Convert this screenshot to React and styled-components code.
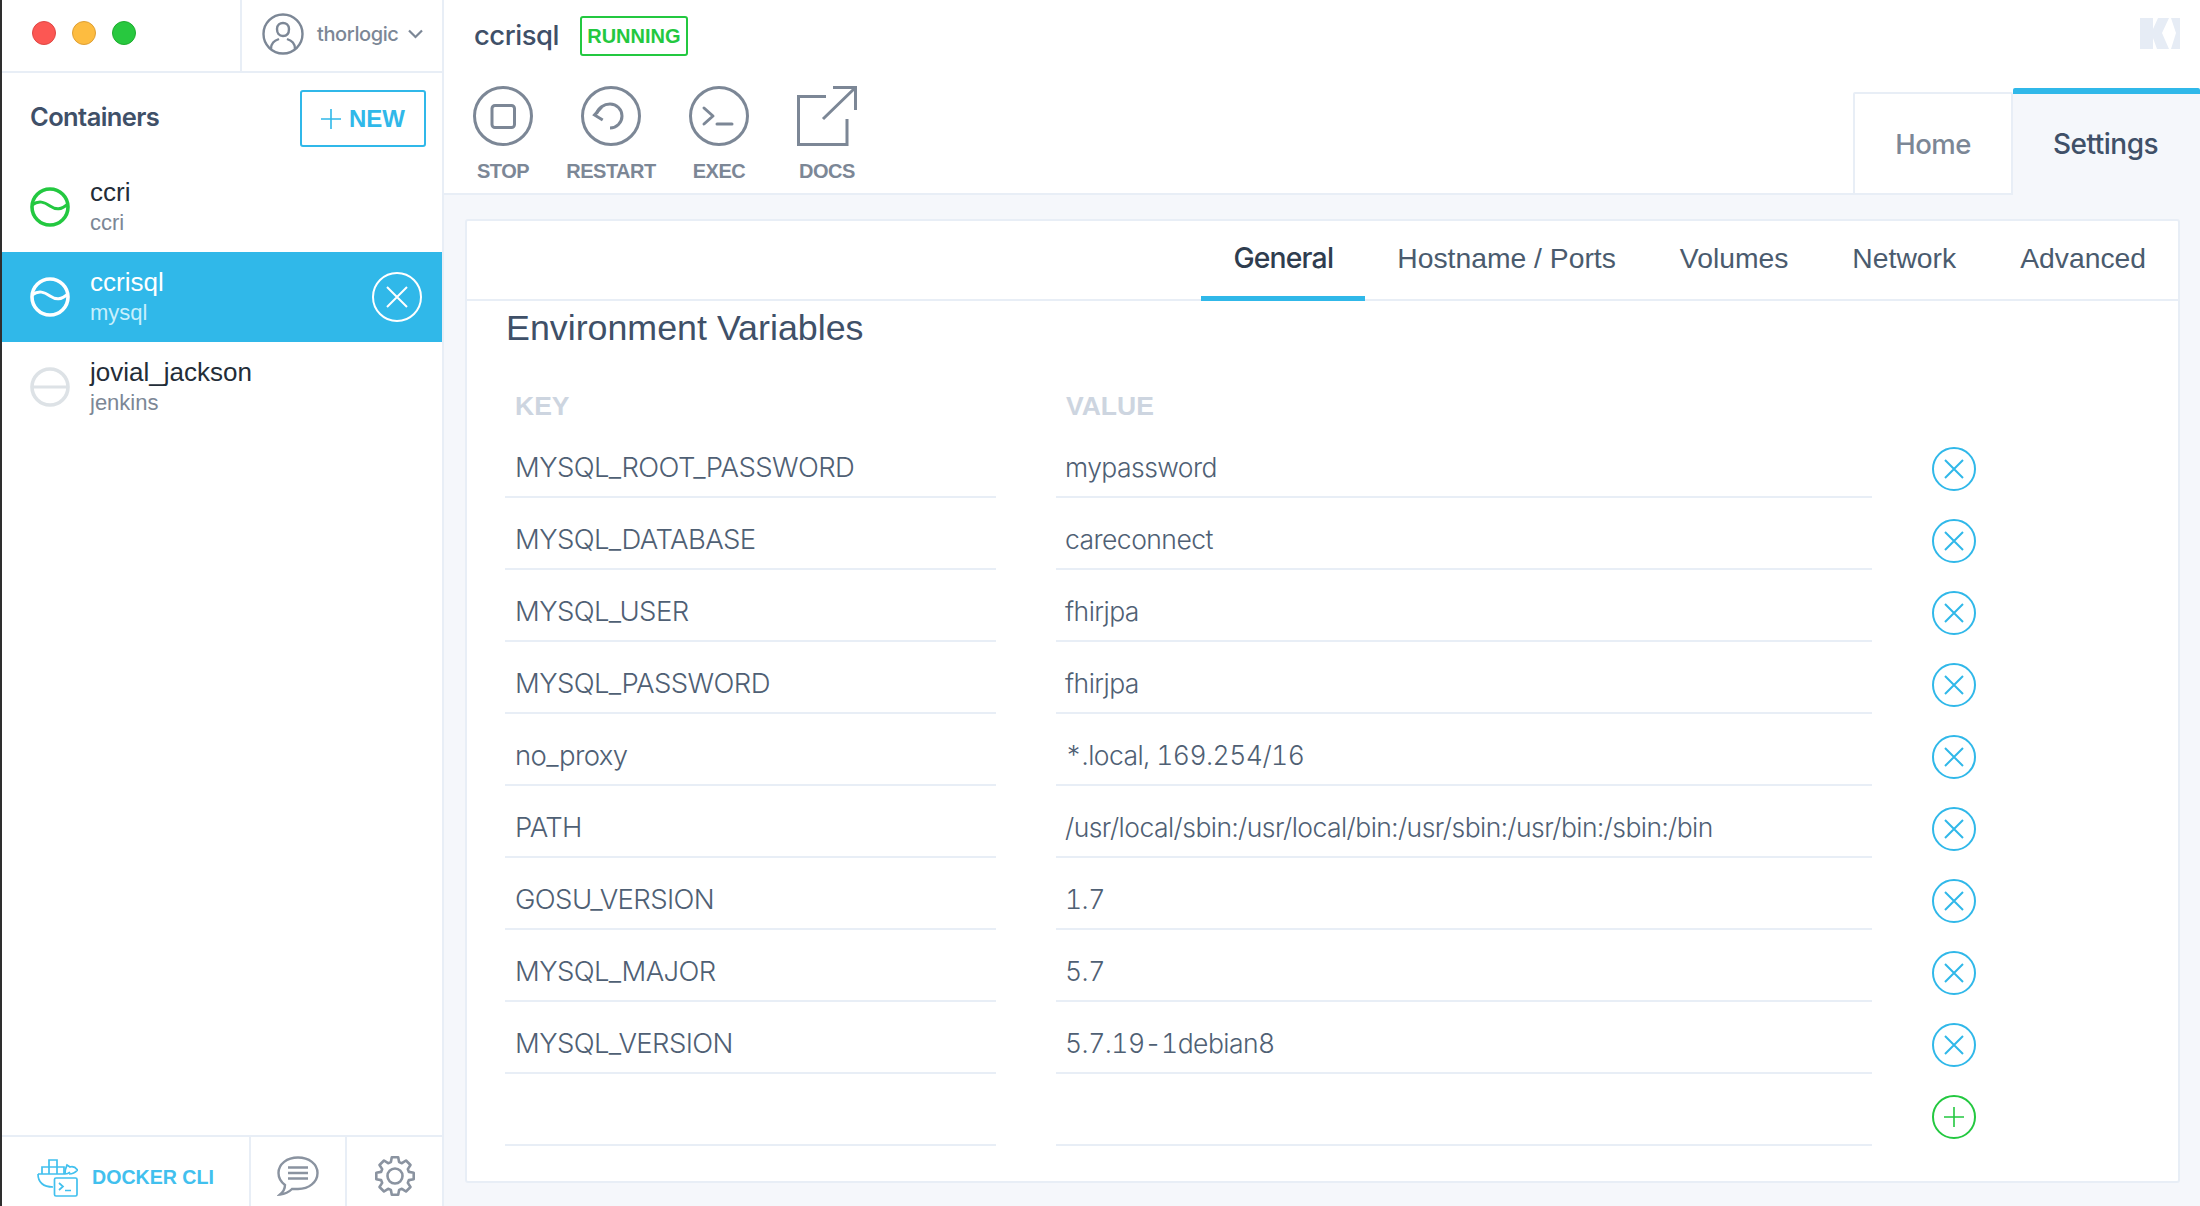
import styled, { createGlobalStyle } from "styled-components";

const GlobalStyle = createGlobalStyle`
  html, body {
    margin: 0;
    padding: 0;
    background: #fff;
  }
  * {
    box-sizing: border-box;
  }
`;

const SANS = `"Liberation Sans", Arial, sans-serif`;
const MEDIUM = `Inter, "Liberation Sans", sans-serif`;
const BLUE = "#30b8e9";
const GREEN = "#23c840";
const LINE = "#e8eef6";
const GREY = "#7c8796";
const DARK = "#3f5068";

const Window = styled.div`
  width: 2200px;
  height: 1206px;
  display: flex;
  overflow: hidden;
  background: #f5f7fb;
  border-left: 2px solid #2e2e2e;
  font-family: ${SANS};
`;

const Sidebar = styled.aside`
  width: 442px;
  flex: none;
  display: flex;
  flex-direction: column;
  background: #fff;
  border-right: 2px solid ${LINE};
`;

const TopBar = styled.div`
  height: 73px;
  flex: none;
  display: flex;
  border-bottom: 2px solid ${LINE};
`;

const Traffic = styled.div`
  width: 240px;
  display: flex;
  align-items: center;
  gap: 16px;
  padding: 0 0 5px 30px;
  border-right: 2px solid ${LINE};
`;

const Light = styled.span`
  width: 24px;
  height: 24px;
  border-radius: 50%;
  background: ${(props) => props.color};
  border: 1px solid ${(props) => props.edge};
`;

const UserBox = styled.div`
  flex: 1;
  display: flex;
  align-items: center;
  padding: 0 0 4px 20px;
  font-family: ${MEDIUM};
  font-weight: 500;
  font-size: 20px;
  letter-spacing: -0.4px;
  color: ${GREY};
`;

const UserName = styled.span`
  margin: 0 10px 0 13px;
`;

const ListHead = styled.div`
  height: 89px;
  flex: none;
  display: flex;
  align-items: center;
  justify-content: space-between;
  padding: 0 16px 0 28px;
`;

const ListTitle = styled.h1`
  margin: 0 0 3px;
  font-family: ${MEDIUM};
  font-weight: 600;
  font-size: 25.5px;
  letter-spacing: -0.6px;
  color: ${DARK};
`;

const NewButton = styled.button`
  width: 126px;
  height: 57px;
  margin-top: 2px;
  display: flex;
  align-items: center;
  justify-content: center;
  gap: 8px;
  padding: 0;
  background: #fff;
  border: 2px solid ${BLUE};
  border-radius: 3px;
  font-family: ${SANS};
  font-weight: 700;
  font-size: 24px;
  color: ${BLUE};
`;

const ContainerList = styled.div`
  flex: 1;
`;

const Item = styled.div`
  height: 90px;
  display: flex;
  align-items: center;
  gap: 20px;
  padding: 0 20px 0 28px;
  background: ${(props) => (props.$active ? BLUE : "transparent")};
`;

const ItemText = styled.div`
  flex: 1;
  display: flex;
  flex-direction: column;
  gap: 1px;
`;

const ItemName = styled.div`
  font-size: 26px;
  line-height: 30px;
  color: ${(props) => (props.$active ? "#fff" : "#232d38")};
`;

const ItemImage = styled.div`
  font-size: 22px;
  line-height: 30px;
  color: ${(props) => (props.$active ? "#c8effc" : GREY)};
`;

const SideFoot = styled.div`
  height: 71px;
  flex: none;
  display: flex;
  border-top: 2px solid ${LINE};
`;

const CliLink = styled.div`
  width: 247px;
  display: flex;
  align-items: center;
  gap: 14px;
  padding: 12px 0 0 35px;
  font-weight: 700;
  font-size: 19.6px;
  color: #41c0ee;
`;

const FootIcon = styled.div`
  width: ${(props) => props.$width}px;
  display: flex;
  align-items: center;
  justify-content: center;
  padding-top: 9px;
  border-left: 2px solid ${LINE};
`;

const Main = styled.main`
  flex: 1;
  min-width: 0;
  display: flex;
  flex-direction: column;
`;

const Header = styled.header`
  height: 195px;
  flex: none;
  display: flex;
  justify-content: space-between;
  background: #fff;
  border-bottom: 2px solid ${LINE};
`;

const HeaderLeft = styled.div`
  display: flex;
  flex-direction: column;
  padding: 16px 0 0 30px;
`;

const TitleRow = styled.div`
  display: flex;
  align-items: center;
  gap: 21px;
`;

const ContainerName = styled.h2`
  margin: 0 0 2px;
  font-family: ${MEDIUM};
  font-weight: 500;
  font-size: 27.5px;
  letter-spacing: -0.5px;
  color: ${DARK};
`;

const Badge = styled.span`
  width: 108px;
  height: 40px;
  display: flex;
  align-items: center;
  justify-content: center;
  border: 2px solid ${GREEN};
  border-radius: 3px;
  font-weight: 700;
  font-size: 20px;
  color: ${GREEN};
`;

const Actions = styled.div`
  display: flex;
  margin: 30px 0 0 -25px;
`;

const Action = styled.div`
  width: 108px;
  display: flex;
  flex-direction: column;
  align-items: center;
  gap: 13px;
  font-weight: 700;
  font-size: 20px;
  line-height: 24px;
  letter-spacing: -0.5px;
  color: ${GREY};
`;

const HeaderRight = styled.div`
  display: flex;
  flex-direction: column;
  align-items: flex-end;
  justify-content: space-between;
  padding-top: 18px;
`;

const Logo = styled.svg`
  margin-right: 20px;
`;

const ViewTabs = styled.div`
  display: flex;
  align-items: flex-end;
  margin-bottom: -2px;
`;

const ViewTab = styled.div`
  width: ${(props) => props.$width}px;
  height: ${(props) => (props.$active ? 107 : 103)}px;
  display: flex;
  align-items: center;
  justify-content: center;
  font-family: ${MEDIUM};
  font-weight: 500;
  font-size: ${(props) => (props.$active ? 28 : 27.5)}px;
  letter-spacing: -0.5px;
  color: ${(props) => (props.$active ? DARK : GREY)};
  background: ${(props) => (props.$active ? "#f5f7fb" : "#fff")};
  border: 2px solid ${LINE};
  border-radius: 2px 2px 0 0;
  ${(props) =>
    props.$active
      ? `border: 0; border-top: 6px solid ${BLUE}; padding: 0 2px 1px 0;`
      : ""}
`;

const Content = styled.div`
  flex: 1;
  padding: 24px 20px 23px 21px;
`;

const Card = styled.section`
  height: 964px;
  display: flex;
  flex-direction: column;
  background: #fff;
  border: 2px solid ${LINE};
  border-radius: 3px;
`;

const SubTabs = styled.nav`
  height: 80px;
  flex: none;
  display: flex;
  justify-content: flex-end;
  border-bottom: 2px solid ${LINE};
`;

const SubTab = styled.div`
  height: 80px;
  display: flex;
  align-items: center;
  padding: 0 32px 1px;
  font-size: 28.3px;
  color: ${(props) => (props.$active ? "#2f3d4f" : "#4a5b6e")};
  font-family: ${(props) => (props.$active ? MEDIUM : SANS)};
  font-weight: ${(props) => (props.$active ? 500 : 400)};
  letter-spacing: ${(props) => (props.$active ? "-0.8px" : "0")};
  border-bottom: 5px solid ${(props) => (props.$active ? BLUE : "transparent")};
`;

const Body = styled.div`
  padding: 5px 0 0 38px;
`;

const SectionTitle = styled.h3`
  margin: 0 0 36px 1px;
  font-weight: 400;
  font-size: 35.8px;
  line-height: 44px;
  color: ${DARK};
`;

const Row = styled.div`
  display: grid;
  grid-template-columns: 491px 816px 44px;
  column-gap: 60px;
  height: ${(props) => (props.$head ? 40 : 72)}px;
`;

const HeadCell = styled.div`
  padding-left: 10px;
  font-weight: 700;
  font-size: 26.5px;
  line-height: 40px;
  color: #cdd5e0;
`;

const Cell = styled.div`
  display: flex;
  align-items: flex-end;
  padding: 0 0 11px ${(props) => (props.$key ? 10 : 9)}px;
  border-bottom: 2px solid ${LINE};
  font-family: ${MEDIUM};
  font-weight: 300;
  font-size: ${(props) => (props.$key ? 27.5 : 26.5)}px;
  font-variant-numeric: tabular-nums;
  line-height: 36px;
  letter-spacing: ${(props) => (props.$key ? -0.6 : -0.55)}px;
  color: #4f6074;
`;

const RowButton = styled.svg`
  align-self: end;
  margin-bottom: 7px;
`;

// status ring in front of every container
const StatusIcon = ({ color, running }) => (
  <svg width="40" height="40" viewBox="0 0 40 40" fill="none" stroke={color} strokeWidth="3.6">
    <circle cx="20" cy="20" r="18" />
    {running ? (
      <path d="M2 18C9 13 14 15 20 19S31 23 38 17" strokeWidth="3" />
    ) : (
      <path d="M2 20H38" strokeWidth="3" />
    )}
  </svg>
);

const CloseIcon = ({ color }) => (
  <RowButton width="44" height="44" viewBox="0 0 44 44" fill="none" stroke={color} strokeWidth="2">
    <circle cx="22" cy="22" r="21" />
    <path d="M13 13L31 31M31 13L13 31" />
  </RowButton>
);

const AddIcon = () => (
  <RowButton width="44" height="44" viewBox="0 0 44 44" fill="none" stroke={GREEN} strokeWidth="2">
    <circle cx="22" cy="22" r="21" />
    <path d="M12 22H32M22 12V32" strokeWidth="1.6" />
  </RowButton>
);

const UserIcon = () => (
  <svg width="42" height="42" viewBox="0 0 42 42" fill="none" stroke={GREY} strokeWidth="2.4">
    <circle cx="21" cy="21" r="19.5" />
    <path d="M15 16C15 12 18 10 21 10S27 12 27 16 25 23 21 23 15 20 15 16Z" />
    <path d="M9 36C9 30 12 28 17 26M33 36C33 30 30 28 25 26" />
  </svg>
);

const Chevron = () => (
  <svg width="15" height="10" viewBox="0 0 15 10" fill="none" stroke={GREY} strokeWidth="2.2">
    <path d="M1 1.5L7.5 8L14 1.5" />
  </svg>
);

const StopIcon = () => (
  <svg width="60" height="60" viewBox="0 0 60 60" fill="none" stroke={GREY} strokeWidth="3">
    <circle cx="30" cy="30" r="28.5" />
    <rect x="19" y="19.5" width="22.5" height="22" rx="3" />
  </svg>
);

const RestartIcon = () => (
  <svg width="60" height="60" viewBox="0 0 60 60" fill="none" stroke={GREY} strokeWidth="3">
    <circle cx="30" cy="30" r="28.5" />
    <path d="M15.5 28C17 22 23 18 29 18A12 12 0 0 1 29 42" />
    <path d="M20.7 21L13.5 29L21.7 34" />
  </svg>
);

const ExecIcon = () => (
  <svg width="60" height="60" viewBox="0 0 60 60" fill="none" stroke={GREY} strokeWidth="3" strokeLinecap="round" strokeLinejoin="round">
    <circle cx="30" cy="30" r="28.5" />
    <path d="M15 22L24 30L15 38M28 38H43" />
  </svg>
);

const DocsIcon = () => (
  <svg width="60" height="60" viewBox="0 0 60 60" fill="none" stroke={GREY} strokeWidth="3">
    <path d="M29 10.5H1.5V58.5H50V33" />
    <path d="M26 33L58.5 1.5M36 1.5H58.5V24" />
  </svg>
);

const DockerIcon = () => (
  <svg width="41" height="38" viewBox="0 0 41 38" fill="none" stroke="#41c0ee" strokeWidth="1.7">
    <path d="M12 8V1H20V8M5 15V8H27V15M12 8V15M20 8V15" />
    <path d="M1 15H28C30 15 32 14 33 13M1 15C1 23 6 28 16 28" />
    <path d="M28 15C28 11 29 8 30 6L33 8C36 7 39 9 40.500 11 38 14 35 15 32 15" />
    <rect x="17.500" y="19" width="22.500" height="18" rx="1.500" fill="#fff" />
    <path d="M22 24L26 27.500L22 31M28 31.500H34" />
  </svg>
);

const ChatIcon = () => (
  <svg width="42" height="40" viewBox="0 0 42 40" fill="none" stroke="#8a93a0" strokeWidth="2.4">
    <path d="M21 1.500C10 1.500 1.500 8 1.500 17C1.500 22 4 26 8 29C8 33 6 36 3 38.500C8 38 12 36 15 33C17 33 19 33 21 33C32 33 40.500 26 40.500 17S32 1.500 21 1.500Z" />
    <path d="M11 11.500H31M11 17H31M11 22.500H31" strokeWidth="2.6" />
  </svg>
);

// 8 tooth gear outline, points worked out from the tooth angle
const gearPath = () => {
  const points = [];
  for (let i = 0; i < 8; i++) {
    const a = (i * Math.PI) / 4;
    [
      [-0.29, 14.5],
      [-0.17, 19],
      [0.17, 19],
      [0.29, 14.5],
    ].forEach(([d, r]) => {
      points.push(`${(21 + r * Math.sin(a + d)).toFixed(1)} ${(21 - r * Math.cos(a + d)).toFixed(1)}`);
    });
  }
  return `M${points.join("L")}Z`;
};

const GearIcon = () => (
  <svg width="42" height="42" viewBox="0 0 42 42" fill="none" stroke="#8a93a0" strokeWidth="2.6" strokeLinejoin="round">
    <path d={gearPath()} />
    <circle cx="21" cy="21" r="7.500" />
  </svg>
);

const ENV = [
  ["MYSQL_ROOT_PASSWORD", "mypassword"],
  ["MYSQL_DATABASE", "careconnect"],
  ["MYSQL_USER", "fhirjpa"],
  ["MYSQL_PASSWORD", "fhirjpa"],
  ["no_proxy", "*.local, 169.254/16"],
  ["PATH", "/usr/local/sbin:/usr/local/bin:/usr/sbin:/usr/bin:/sbin:/bin"],
  ["GOSU_VERSION", "1.7"],
  ["MYSQL_MAJOR", "5.7"],
  ["MYSQL_VERSION", "5.7.19-1debian8"],
];

const App = () => {
  return (
    <Window>
      <GlobalStyle />
      <Sidebar>
        <TopBar>
          <Traffic>
            <Light color="#fc5753" edge="#df4744" />
            <Light color="#fdbc40" edge="#de9f34" />
            <Light color="#28c83f" edge="#1fac2f" />
          </Traffic>
          <UserBox>
            <UserIcon />
            <UserName>thorlogic</UserName>
            <Chevron />
          </UserBox>
        </TopBar>
        <ListHead>
          <ListTitle>Containers</ListTitle>
          <NewButton>
            <svg width="20" height="20" viewBox="0 0 20 20" stroke={BLUE} strokeWidth="1.6">
              <path d="M0 10H20M10 0V20" />
            </svg>
            NEW
          </NewButton>
        </ListHead>
        <ContainerList>
          <Item>
            <StatusIcon color={GREEN} running />
            <ItemText>
              <ItemName>ccri</ItemName>
              <ItemImage>ccri</ItemImage>
            </ItemText>
          </Item>
          <Item $active>
            <StatusIcon color="#fff" running />
            <ItemText>
              <ItemName $active>ccrisql</ItemName>
              <ItemImage $active>mysql</ItemImage>
            </ItemText>
            <svg width="50" height="50" viewBox="0 0 50 50" fill="none" stroke="#fff" strokeWidth="2">
              <circle cx="25" cy="25" r="24" />
              <path d="M15 15L35 35M35 15L15 35" />
            </svg>
          </Item>
          <Item>
            <StatusIcon color="#dde2e6" />
            <ItemText>
              <ItemName>jovial_jackson</ItemName>
              <ItemImage>jenkins</ItemImage>
            </ItemText>
          </Item>
        </ContainerList>
        <SideFoot>
          <CliLink>
            <DockerIcon />
            DOCKER CLI
          </CliLink>
          <FootIcon $width={96}>
            <ChatIcon />
          </FootIcon>
          <FootIcon $width={97}>
            <GearIcon />
          </FootIcon>
        </SideFoot>
      </Sidebar>
      <Main>
        <Header>
          <HeaderLeft>
            <TitleRow>
              <ContainerName>ccrisql</ContainerName>
              <Badge>RUNNING</Badge>
            </TitleRow>
            <Actions>
              <Action>
                <StopIcon />
                STOP
              </Action>
              <Action>
                <RestartIcon />
                RESTART
              </Action>
              <Action>
                <ExecIcon />
                EXEC
              </Action>
              <Action>
                <DocsIcon />
                DOCS
              </Action>
            </Actions>
          </HeaderLeft>
          <HeaderRight>
            <Logo width="40" height="31" viewBox="0 0 40 31" fill="#e6ecf5">
              <path d="M0 0H13V11L18 0H29L22 15L29 31H17L13 20V31H0Z" />
              <path d="M31 0H40V31H31L36 15Z" />
            </Logo>
            <ViewTabs>
              <ViewTab $width={160}>Home</ViewTab>
              <ViewTab $width={187} $active>
                Settings
              </ViewTab>
            </ViewTabs>
          </HeaderRight>
        </Header>
        <Content>
          <Card>
            <SubTabs>
              <SubTab $active>General</SubTab>
              <SubTab>Hostname / Ports</SubTab>
              <SubTab>Volumes</SubTab>
              <SubTab>Network</SubTab>
              <SubTab>Advanced</SubTab>
            </SubTabs>
            <Body>
              <SectionTitle>Environment Variables</SectionTitle>
              <Row $head>
                <HeadCell>KEY</HeadCell>
                <HeadCell>VALUE</HeadCell>
              </Row>
              {ENV.map(([key, value]) => (
                <Row key={key}>
                  <Cell $key>{key}</Cell>
                  <Cell>{value}</Cell>
                  <CloseIcon color={BLUE} />
                </Row>
              ))}
              <Row>
                <Cell $key />
                <Cell />
                <AddIcon />
              </Row>
            </Body>
          </Card>
        </Content>
      </Main>
    </Window>
  );
};

export default App;
